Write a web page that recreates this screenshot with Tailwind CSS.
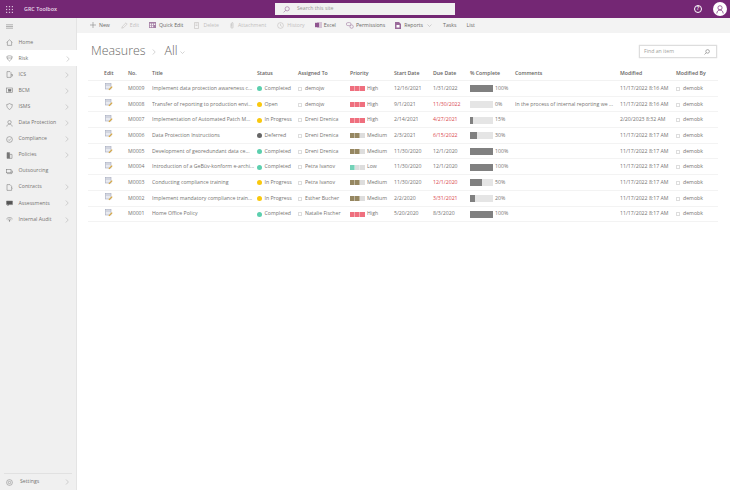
<!DOCTYPE html>
<html lang="en">
  <head>
    <meta charset="UTF-8" />
    <title>Measures - GRC Toolbox</title>
    <script src="https://cdn.jsdelivr.net/npm/@tailwindcss/browser@4"></script>
  </head>
  <body class="w-[730px] h-[490px] overflow-hidden bg-white font-['Open_Sans',sans-serif] text-[5.2px] text-[#757371]">
    <!-- Suite bar -->
    <header class="h-[18px] bg-[#742774] flex items-center relative text-white">
      <div class="w-[18px] flex justify-center">
        <svg width="7" height="7" viewBox="0 0 7 7" fill="#d9bfd9"><rect x="0" y="0" width="1.2" height="1.2"/><rect x="2.9" y="0" width="1.2" height="1.2"/><rect x="5.8" y="0" width="1.2" height="1.2"/><rect x="0" y="2.9" width="1.2" height="1.2"/><rect x="2.9" y="2.9" width="1.2" height="1.2"/><rect x="5.8" y="2.9" width="1.2" height="1.2"/><rect x="0" y="5.8" width="1.2" height="1.2"/><rect x="2.9" y="5.8" width="1.2" height="1.2"/><rect x="5.8" y="5.8" width="1.2" height="1.2"/></svg>
      </div>
      <span class="ml-[6px] text-[5.4px] font-semibold text-[#e9dbe9]">GRC Toolbox</span>
      <div class="absolute left-[275px] top-[3px] w-[180px] h-[12px] bg-[#f1f0f1] flex items-center pl-[8px] gap-[7px] text-[#9a9896]">
        <svg width="7" height="7" viewBox="0 0 7 7" fill="none" stroke="#9a6a9a" stroke-width="0.6"><circle cx="4.2" cy="2.8" r="2.1"/><path d="M2.7 4.3 0.6 6.4"/></svg>
        <span>Search this site</span>
      </div>
      <div class="ml-auto flex items-center gap-[11px] pr-[3px]">
        <div class="w-[8px] h-[8px] rounded-full border-[0.7px] border-white flex items-center justify-center text-[5px] font-semibold">?</div>
        <div class="w-[14px] h-[14px] rounded-full bg-white flex items-center justify-center">
          <svg width="8" height="9" viewBox="0 0 8 9" fill="none" stroke="#742774" stroke-width="0.7"><circle cx="4" cy="2.8" r="2.1"/><path d="M0.8 8.5C1 6 2.4 5 4 5s3 1 3.2 3.5"/></svg>
        </div>
      </div>
    </header>

    <div class="flex h-[472px]">
      <!-- Left nav -->
      <nav id="nav" class="w-[77px] shrink-0 bg-[#f0f0f0] border-r border-[#e4e4e4] flex flex-col">
        <div class="h-[16px] flex items-center pl-[6px]">
          <svg width="7" height="5" viewBox="0 0 7 5" stroke="#888" stroke-width="0.6"><path d="M0 0.8H7M0 2.5H7M0 4.2H7"/></svg>
        </div>
        <div id="nav-items" class="flex flex-col"></div>
        <div class="mt-auto mx-[4px] border-t border-[#e1e1e1] h-[17px] flex items-center">
          <svg class="ml-[2px]" width="7" height="7" viewBox="0 0 7 7" fill="none" stroke="#8a8a8a" stroke-width="0.6"><circle cx="3.5" cy="3.5" r="2.9"/><circle cx="3.5" cy="3.5" r="1.2"/></svg>
          <span class="ml-[7px]">Settings</span>
          <svg class="ml-auto mr-[3px]" width="4" height="6" viewBox="0 0 4 6" fill="none" stroke="#aaa" stroke-width="0.5"><path d="M1 0.5 3.4 3 1 5.5"/></svg>
        </div>
      </nav>

      <main class="flex-1 min-w-0 flex flex-col">
        <!-- Command bar -->
        <div class="h-[15px] bg-[#f3f3f3] flex items-center pl-[13px] text-[#6a6866]">
          <button class="flex items-center gap-[3px] mr-[11px]"><svg width="6" height="6" viewBox="0 0 6 6" stroke="#888" stroke-width="0.6"><path d="M3 0V6M0 3H6"/></svg>New</button>
          <button class="flex items-center gap-[2px] mr-[10px] text-[#c2c0be]"><svg width="7" height="7" viewBox="0 0 7 7" fill="none" stroke="#c2c0be" stroke-width="0.6"><path d="M0.8 6.2 1.4 4.4 5 0.8 6.2 2 2.6 5.6Z"/></svg>Edit</button>
          <button class="flex items-center gap-[3px] mr-[11px]"><svg width="7" height="6" viewBox="0 0 7 6" fill="#a57fa5"><path d="M0 0H7V6H0ZM0.8 1.6V2.9H2.2V1.6ZM2.9 1.6V2.9H4.2V1.6ZM4.9 1.6V2.9H6.2V1.6ZM0.8 3.6V5.2H2.2V3.6ZM2.9 3.6V5.2H4.2V3.6Z"/></svg>Quick Edit</button>
          <button class="flex items-center gap-[4px] mr-[11px] text-[#c2c0be]"><svg width="5" height="7" viewBox="0 0 5 7" fill="none" stroke="#c2c0be" stroke-width="0.6"><path d="M0.5 0.5H4.5V6.5H0.5ZM1.5 2H3.5M1.5 3.5H3.5"/></svg>Delete</button>
          <button class="flex items-center gap-[4px] mr-[11px] text-[#c2c0be]"><svg width="4" height="7" viewBox="0 0 4 7" fill="none" stroke="#c2c0be" stroke-width="0.7"><path d="M1 1.5V5.2C1 6.6 3 6.6 3 5.2V1.3C3 0.3 1.7 0.3 1.7 1.3V4.5"/></svg>Attachment</button>
          <button class="flex items-center gap-[3px] mr-[10px] text-[#c2c0be]"><svg width="7" height="7" viewBox="0 0 7 7" fill="none" stroke="#c2c0be" stroke-width="0.6"><circle cx="3.5" cy="3.5" r="2.9"/><path d="M3.5 1.8V3.6L4.8 4.4"/></svg>History</button>
          <button class="flex items-center gap-[2px] mr-[10px]"><svg width="7" height="6" viewBox="0 0 7 6"><rect x="2" y="0" width="5" height="6" fill="#d6c4d6"/><rect x="0" y="0.8" width="4" height="4.4" fill="#8f558f"/></svg>Excel</button>
          <button class="flex items-center gap-[2px] mr-[10px]"><svg width="8" height="7" viewBox="0 0 8 7" fill="none" stroke="#a57fa5" stroke-width="0.6"><rect x="0.4" y="0.6" width="4.6" height="3" rx="1.4"/><circle cx="5.6" cy="4.6" r="1.7"/></svg>Permissions</button>
          <button class="flex items-center gap-[3px] mr-[11px]"><svg width="6" height="7" viewBox="0 0 6 7"><path d="M0 0H4L6 2V7H0Z" fill="#9a6a9a"/><rect x="1.5" y="3" width="3" height="2.5" fill="#fff"/></svg>Reports<svg class="ml-[1px]" width="5" height="3" viewBox="0 0 5 3" fill="none" stroke="#aaa" stroke-width="0.5"><path d="M0.5 0.5 2.5 2.5 4.5 0.5"/></svg></button>
          <button class="mr-[10px]">Tasks</button>
          <button>List</button>
        </div>

        <!-- Title row -->
        <div class="h-[32px] pt-[5px] flex items-center pl-[14px] pr-[13px]">
          <h1 class="text-[12.4px] font-light text-[#6a6866] leading-none">Measures</h1>
          <svg class="ml-[6px]" width="4" height="6" viewBox="0 0 4 6" fill="none" stroke="#aaa" stroke-width="0.5"><path d="M0.8 0.5 3.2 3 0.8 5.5"/></svg>
          <span class="ml-[9px] text-[12.4px] font-light text-[#6a6866] leading-none">All</span>
          <svg class="ml-[2px] mt-[2px]" width="5" height="3" viewBox="0 0 5 3" fill="none" stroke="#aaa" stroke-width="0.5"><path d="M0.5 0.5 2.5 2.5 4.5 0.5"/></svg>
          <div class="ml-auto w-[78px] h-[13px] bg-white border border-[#dddddd] shadow-[0_0_1px_#ccc] flex items-center pl-[4px] pr-[6px] justify-between text-[#a19f9d]">
            <span>Find an item</span>
            <svg width="6" height="6" viewBox="0 0 7 7" fill="none" stroke="#777" stroke-width="0.7"><circle cx="4.2" cy="2.8" r="2.1"/><path d="M2.7 4.3 0.6 6.4"/></svg>
          </div>
        </div>

        <!-- List -->
        <div id="list" class="ml-[11px] w-[630px] mt-[1px]">
          <div class="grid grid-cols-[17px_23px_24px_105px_41px_52px_44px_39px_37px_45px_105px_56px_42px] h-[15px] pt-[1px] items-center font-semibold text-[#666462] border-b border-[#f2f2f2]">
            <span></span><span class="col-start-2 -ml-[1px]">Edit</span><span>No.</span><span>Title</span><span>Status</span><span>Assigned To</span><span>Priority</span><span>Start Date</span><span>Due Date</span><span>% Complete</span><span>Comments</span><span>Modified</span><span>Modified By</span>
          </div>
          <div id="rows"></div>
        </div>
      </main>
    </div>

    <script>
      const navIcons = {
        home: '<path d="M0.6 3.4 3.5 0.8 6.4 3.4M1.4 2.9V6.4H5.6V2.9"/>',
        risk: '<path d="M0.8 1.5C2.5 0.6 4.5 0.6 6.2 1.5 6.2 3.5 5 5 3.5 6 2 5 0.8 3.5 0.8 1.5ZM1 3H6"/>',
        ics: '<path d="M1 0.6H4L5 1.6V6.4H1ZM5 3.5H6.6V5H5"/>',
        bcm: '<rect x="0.5" y="1" width="6" height="4.6"/><rect x="2.4" y="2.4" width="2.6" height="1.8" fill="#777"/>',
        isms: '<path d="M3.5 0.5C4.5 1.3 5.5 1.5 6.3 1.5 6.3 4 5.3 5.6 3.5 6.5 1.7 5.6 0.7 4 0.7 1.5 1.5 1.5 2.5 1.3 3.5 0.5Z"/>',
        data: '<circle cx="3.5" cy="2.2" r="1.7"/><path d="M0.8 6.5C1 5 2 4.2 3.5 4.2S6 5 6.2 6.5"/>',
        compliance: '<circle cx="3.5" cy="3.5" r="2.9"/><path d="M2.2 3.5 3.2 4.5 4.9 2.6"/>',
        policies: '<path d="M1 0.6H3.6V6.4H1Z" fill="#777"/><path d="M3.6 2.4H6V6.4H3.6Z"/>',
        outsourcing: '<rect x="0.6" y="1.6" width="4.4" height="3.2"/><path d="M5 3H6.6V4.8H5M1 5.6H6"/>',
        contracts: '<path d="M1 0.6H4L5.6 2.2V6.4H1ZM5.6 3.6 6.6 4.4"/>',
        assessments: '<path d="M0.5 1H6.5V4.6H3L1.8 5.8V4.6H0.5Z" fill="#555"/>',
        audit: '<path d="M0.4 3C2.2 1 4.8 1 6.6 3M1.6 3.8C2.8 2.8 4.2 2.8 5.4 3.8"/><circle cx="3.5" cy="4.8" r="0.5" fill="#777"/>',
      };
      const navItems = [
        ["Home", "home", false],
        ["Risk", "risk", true],
        ["ICS", "ics", true],
        ["BCM", "bcm", true],
        ["ISMS", "isms", true],
        ["Data Protection", "data", true],
        ["Compliance", "compliance", true],
        ["Policies", "policies", true],
        ["Outsourcing", "outsourcing", false],
        ["Contracts", "contracts", true],
        ["Assessments", "assessments", true],
        ["Internal Audit", "audit", true],
      ];
      document.getElementById("nav-items").innerHTML = navItems
        .map(
          ([label, icon, arrow]) => `
          <div class="h-[16.1px] pt-[1px] flex items-center pl-[6px] pr-[7px] ${label === "Risk" ? "bg-white w-[77px]" : ""}">
            <svg width="7" height="7" viewBox="0 0 7 7" fill="none" stroke="#7a7a7a" stroke-width="0.55">${navIcons[icon]}</svg>
            <span class="ml-[5.5px]">${label}</span>
            ${arrow ? '<svg class="ml-auto" width="4" height="6" viewBox="0 0 4 6" fill="none" stroke="#aaa" stroke-width="0.5"><path d="M0.8 0.5 3.2 3 0.8 5.5"/></svg>' : ""}
          </div>`
        )
        .join("");

      const statusDot = { Completed: "bg-[#5ccfae]", Open: "bg-[#f9c80e]", "In Progress": "bg-[#f9c80e]", Deferred: "bg-[#666666]" };
      // colour and filled segments per priority
      const priorityBar = {
        High: ["bg-[#ef6f7e]", 3],
        Medium: ["bg-[#968761]", 2],
        Low: ["bg-[#74d2b8]", 1],
      };
      const rows = [
        ["M0009", "Implement data protection awareness c...", "Completed", "demojw", "High", "12/16/2021", "1/31/2022", false, 100, "", "11/17/2022 8:16 AM"],
        ["M0008", "Transfer of reporting to production envi...", "Open", "demojw", "High", "9/1/2021", "11/30/2022", true, 0, "In the process of internal reporting we ...", "11/17/2022 8:16 AM"],
        ["M0007", "Implementation of Automated Patch M...", "In Progress", "Dreni Drenica", "High", "2/14/2021", "4/27/2021", true, 15, "", "2/20/2023 8:32 AM"],
        ["M0006", "Data Protection Instructions", "Deferred", "Dreni Drenica", "Medium", "2/3/2021", "6/15/2022", true, 30, "", "11/17/2022 8:17 AM"],
        ["M0005", "Development of georedundant data ce...", "Completed", "Dreni Drenica", "Medium", "11/30/2020", "12/1/2020", false, 100, "", "11/17/2022 8:17 AM"],
        ["M0004", "Introduction of a GeBüv-konform e-archi...", "Completed", "Petra Ivanov", "Low", "11/30/2020", "12/1/2020", false, 100, "", "11/17/2022 8:17 AM"],
        ["M0003", "Conducting compliance training", "In Progress", "Petra Ivanov", "Medium", "11/30/2020", "12/1/2020", true, 50, "", "11/17/2022 8:17 AM"],
        ["M0002", "Implement mandatory compliance train...", "In Progress", "Esther Bucher", "Medium", "2/2/2020", "3/31/2021", true, 20, "", "11/17/2022 8:17 AM"],
        ["M0001", "Home Office Policy", "Completed", "Natalie Fischer", "High", "5/20/2020", "8/3/2020", false, 100, "", "11/17/2022 8:17 AM"],
      ];
      const person = (name) =>
        `<span class="flex items-center gap-[3px]"><span class="w-[4px] h-[4px] border-[0.5px] border-[#dddddd]"></span>${name}</span>`;
      document.getElementById("rows").innerHTML = rows
        .map(([no, title, status, who, prio, start, due, late, pct, comment, modified]) => {
          const [barColor, filled] = priorityBar[prio];
          const segments = [0, 1, 2]
            .map((i) => `<span class="w-[5px] h-[5px] border-r border-white/40 last:border-r-0 ${i < filled ? barColor : "bg-[#dddddd]"}"></span>`)
            .join("");
          return `
          <div class="grid grid-cols-[17px_23px_24px_105px_41px_52px_44px_39px_37px_45px_105px_56px_42px] h-[15.7px] pt-[1px] items-center border-b border-[#f3f3f3]">
            <svg class="col-start-2 -mt-[3px]" width="8" height="8" viewBox="0 0 8 8"><rect x="0.5" y="0.5" width="5.5" height="5.5" fill="#e8eaf0" stroke="#a3a9bc" stroke-width="0.6"/><path d="M0.8 2H5.8" stroke="#a3a9bc" stroke-width="0.6"/><path d="M3.5 6.5 6.8 3.2 7.6 4 4.3 7.3Z" fill="#d8a63a"/></svg>
            <span>${no}</span>
            <span class="whitespace-nowrap overflow-hidden">${title}</span>
            <span class="flex items-center gap-[2.5px] whitespace-nowrap"><span class="w-[5px] h-[5px] rounded-full ${statusDot[status]}"></span>${status}</span>
            ${person(who)}
            <span class="flex items-center"><span class="flex mr-[2px]">${segments}</span>${prio}</span>
            <span>${start}</span>
            <span class="${late ? "text-[#d9484c]" : ""}">${due}</span>
            <span class="flex items-center"><span class="w-[23px] h-[7px] bg-[#e5e5e5] mr-[2px] block"><span class="block h-full bg-[#808080]" style="width:${pct}%"></span></span>${pct}%</span>
            <span class="whitespace-nowrap overflow-hidden">${comment}</span>
            <span class="whitespace-nowrap">${modified}</span>
            ${person("demobk")}
          </div>`;
        })
        .join("");
    </script>
  </body>
</html>
